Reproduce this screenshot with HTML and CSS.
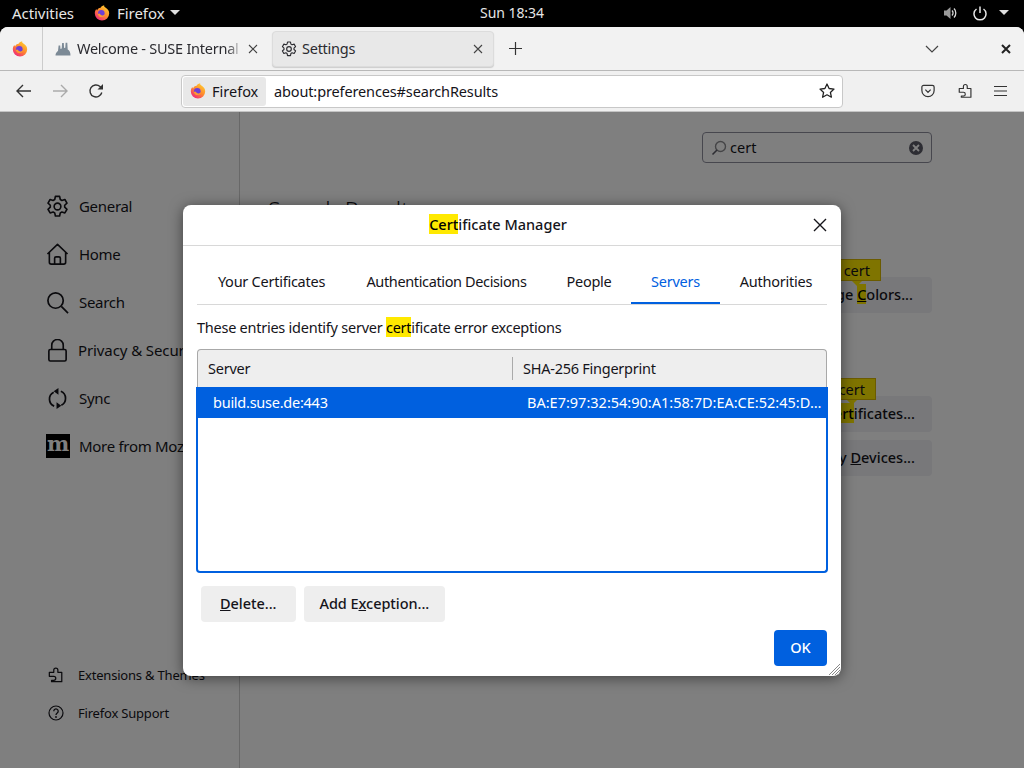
FILE: index.html
```html
<!DOCTYPE html>
<html>
<head>
	<meta charset="utf-8">
	<title>Settings</title>
	<link rel="stylesheet" href="styles.css">
</head>
<body>
<svg class="defs" width="0" height="0">
	<defs>
		<linearGradient id="fxg" x1="0.85" y1="0.05" x2="0.2" y2="0.95">
			<stop offset="0" stop-color="#ffd02e"/>
			<stop offset="0.5" stop-color="#ff8a2e"/>
			<stop offset="1" stop-color="#f0287a"/>
		</linearGradient>
		<symbol id="fx" viewBox="0 0 16 16">
			<path fill="url(#fxg)" d="M8 15.500A7.200 7.200 0 0 1 .8 8.300c0-1.500.5-3 1.500-4.200.1.600.4 1 .8 1.300C3.500 3.800 5 2.900 6.600 2.700 7 1.700 8.200.8 10.200.3 9.900 1.300 10.400 1.900 11.400 2.500c2.400 1.400 3.800 3.400 3.800 5.800A7.200 7.200 0 0 1 8 15.500z"/>
			<circle cx="7.300" cy="8.300" r="3.300" fill="#6e3fd6"/>
			<path fill="#ff9a2e" d="M3.600 8.400c.3 2.400 2.200 3.900 4.400 3.700 1.700-.2 2.900-1.300 3.200-2.800-1 1.100-2.400 1.400-3.700.9-1-.4-1.600-1-1.800-1.800-.7.400-1.400.4-2.100 0z"/>
		</symbol>
		<symbol id="gear" viewBox="0 0 24 24">
			<path fill="none" stroke="currentColor" stroke-width="1.700" stroke-linejoin="round" d="M9.800 1.500h4.400l.7 3.200 1.700 1 3.100-1 2.200 3.800-2.400 2.200v2l2.400 2.200-2.200 3.800-3.100-1-1.700 1-.7 3.200H9.800l-.7-3.200-1.700-1-3.100 1-2.200-3.800 2.400-2.200v-2L2.100 8.500l2.200-3.800 3.100 1 1.700-1z"/>
			<circle cx="12" cy="12" r="3.500" fill="none" stroke="currentColor" stroke-width="1.700"/>
		</symbol>
		<symbol id="puzzle" viewBox="0 0 18 18">
			<path fill="none" stroke="currentColor" stroke-width="1.400" stroke-linejoin="round" d="M1.500 6h5V3.500a2.300 2.300 0 0 1 4.600 0V6h4.400v10.500H4V15h2.500a2.200 2.200 0 0 0 0-4.500h-5z"/>
		</symbol>
		<symbol id="tabx" viewBox="0 0 10 10">
			<path stroke="currentColor" stroke-width="1.100" d="M1 1l8 8M9 1l-8 8"/>
		</symbol>
	</defs>
</svg>

<div class="topbar">
	<span>Activities</span>
	<span class="tb-app">
		<svg class="logo"><use href="#fx"/></svg>
		Firefox
		<i class="caret"></i>
	</span>
	<span class="tb-clock">Sun 18:34</span>
	<span class="tb-tray">
		<svg class="tray-snd" width="15" height="16" viewBox="0 0 15 16"><path fill="#9a9a9a" d="M1 5.500h2.500L7.500 2v12l-4-3.500H1z"/><path fill="none" stroke="#d8d8d8" stroke-width="1.300" d="M9 5.500a3.500 3.500 0 0 1 0 5M11 3.500a6.500 6.500 0 0 1 0 9"/></svg>
		<svg width="14" height="16" viewBox="0 0 14 16"><path fill="none" stroke="#e8e8e8" stroke-width="1.500" d="M7 1.500v6.500M3.500 4a6 6 0 1 0 7 0"/></svg>
		<i class="caret"></i>
	</span>
</div>

<div class="window">
	<div class="tabbar">
		<div class="tab-pin"><svg class="logo"><use href="#fx"/></svg></div>
		<div class="tab tab-welcome">
			<svg width="17" height="14" viewBox="0 0 17 14"><path fill="#7c8a96" d="M0.500 13.500c0-2 1-3.500 2.500-4.500l.6-5.500h1.600l.3 3.500 1.200-.5.4-5.500h1.700l.3 5 1.200-.2.300-5h1.700l.4 6.700c1.600.8 2.800 2.800 2.800 6z"/></svg>
			<span class="tab-title">Welcome - SUSE Internal Q</span>
			<svg class="tab-x"><use href="#tabx"/></svg>
		</div>
		<div class="tab tab-active">
			<svg class="tab-gear"><use href="#gear"/></svg>
			<span class="tab-title">Settings</span>
			<svg class="tab-x"><use href="#tabx"/></svg>
		</div>
		<svg class="newtab" width="13" height="13" viewBox="0 0 13 13"><path stroke="#333" stroke-width="1.200" d="M6.500 0v13M0 6.500h13"/></svg>
		<svg class="tablist" width="14" height="8" viewBox="0 0 14 8"><path fill="none" stroke="#444" stroke-width="1.200" d="M1 1l6 6 6-6"/></svg>
		<svg class="winclose" width="10" height="10" viewBox="0 0 10 10"><path stroke="#222" stroke-width="2" d="M1 1l8 8M9 1l-8 8"/></svg>
	</div>

	<div class="navbar">
		<svg class="nav-back" width="16" height="14" viewBox="0 0 16 14"><path fill="none" stroke="#333" stroke-width="1.400" d="M15 7H1.500M7 1L1 7l6 6"/></svg>
		<svg class="nav-fwd" width="16" height="14" viewBox="0 0 16 14"><path fill="none" stroke="#aaa" stroke-width="1.400" d="M1 7h13.500M9 1l6 6-6 6"/></svg>
		<svg class="nav-reload" width="16" height="16" viewBox="0 0 16 16"><path fill="none" stroke="#333" stroke-width="1.400" d="M13.800 9.500A6 6 0 1 1 12 3.500l2 2"/><path fill="#333" d="M15 1v5.500H9.500z"/></svg>
		<div class="urlbar">
			<span class="identity"><svg class="logo"><use href="#fx"/></svg>Firefox</span>
			<span class="url">about:preferences#searchResults</span>
			<svg class="star" width="16" height="16" viewBox="0 0 16 16"><path fill="none" stroke="#222" stroke-width="1.300" stroke-linejoin="round" d="M8 1l2.100 4.500 4.900.6-3.600 3.300 1 4.800L8 11.800l-4.400 2.400 1-4.800L1 6.100l4.900-.6z"/></svg>
		</div>
		<div class="nav-tools">
			<svg class="ic-pocket" width="14" height="14" viewBox="0 0 16 16"><path fill="none" stroke="#333" stroke-width="1.400" d="M3 1.500h10a2 2 0 0 1 2 2v4a7 7 0 0 1-14 0v-4a2 2 0 0 1 2-2zM5 6.500l3 3 3-3"/></svg>
			<svg class="ic-puzzle"><use href="#puzzle"/></svg>
			<svg width="13" height="12" viewBox="0 0 13 12"><path stroke="#333" stroke-width="1.200" d="M0 1.500h13M0 6h13M0 10.500h13"/></svg>
		</div>
	</div>

	<div class="content">
		<div class="sidebar">
			<ul class="cats">
				<li><svg class="cat-ic"><use href="#gear"/></svg>General</li>
				<li><svg class="cat-ic" viewBox="0 0 24 24"><path fill="none" stroke="currentColor" stroke-width="1.700" stroke-linejoin="round" d="M1.500 11.500L12 1.500l10.500 10M3.500 9.500V20a2 2 0 0 0 2 2h13a2 2 0 0 0 2-2V9.500M9 22v-6a1.500 1.500 0 0 1 1.500-1.500h3A1.500 1.500 0 0 1 15 16v6"/></svg>Home</li>
				<li><svg class="cat-ic" viewBox="0 0 24 24"><circle cx="10" cy="10" r="8" fill="none" stroke="currentColor" stroke-width="1.800"/><path stroke="currentColor" stroke-width="1.800" d="M16 16l7 7"/></svg>Search</li>
				<li class="cat-priv"><svg class="cat-ic" viewBox="0 0 24 24"><path fill="none" stroke="currentColor" stroke-width="1.700" d="M4.500 11h15a1.500 1.500 0 0 1 1.500 1.500v9a1.500 1.500 0 0 1-1.500 1.500h-15A1.500 1.500 0 0 1 3 21.500v-9A1.500 1.500 0 0 1 4.500 11zM6 11V6.500a6 6 0 0 1 12 0V11"/></svg>Privacy &amp; Security</li>
				<li><svg class="cat-ic" viewBox="0 0 24 24"><path fill="none" stroke="currentColor" stroke-width="1.800" d="M8 5.500A8 8 0 0 0 8.500 20M16 19a8 8 0 0 0-.5-14.500"/><path fill="currentColor" d="M13 1v7L8 4.500zM11 23v-7l5 3.500z"/></svg>Sync</li>
				<li><span class="moz-m">m</span>More from Mozilla</li>
			</ul>
			<ul class="cats-foot">
				<li><svg class="foot-ic"><use href="#puzzle"/></svg>Extensions &amp; Themes</li>
				<li><svg class="foot-ic" viewBox="0 0 16 16"><circle cx="8" cy="8" r="7" fill="none" stroke="currentColor" stroke-width="1.200"/><path fill="none" stroke="currentColor" stroke-width="1.300" d="M5.800 6.200a2.200 2.200 0 1 1 3.400 1.800C8.400 8.600 8 9 8 10"/><circle cx="8" cy="12" r="0.900" fill="currentColor"/></svg>Firefox Support</li>
			</ul>
		</div>
		<div class="main">
			<div class="search">
				<svg width="16" height="16" viewBox="0 0 16 16"><circle cx="9.500" cy="6.500" r="5" fill="none" stroke="#8a8a8e" stroke-width="1.400"/><path stroke="#5b5b66" stroke-width="1.600" d="M6 10l-4.500 4.500"/></svg>
				<span class="search-val">cert</span>
				<span class="search-clear"><svg width="8" height="8" viewBox="0 0 8 8"><path stroke="#fff" stroke-width="1.800" d="M1 1l6 6M7 1L1 7"/></svg></span>
			</div>
			<h1 class="results">Search Results</h1>
			<div class="pref-btn pref-colors">
				<span class="tag tag-a">cert<i></i></span>
				<span>Manage <u class="hl">C</u>olors...</span>
			</div>
			<div class="pref-btn pref-certs">
				<span class="tag tag-b">cert<i></i></span>
				<span>View <span class="hl">Cert</span>ificates...</span>
			</div>
			<div class="pref-btn pref-dev"><span>Security <u>D</u>evices...</span></div>
		</div>
	</div>

	<div class="overlay"></div>

	<div class="dialog">
		<div class="dlg-title">
			<span><span class="hl">Cert</span>ificate Manager</span>
			<svg class="dlg-x" width="14" height="14" viewBox="0 0 14 14"><path stroke="#15141a" stroke-width="1.400" d="M1 1l12 12M13 1L1 13"/></svg>
		</div>
		<div class="dlg-body">
			<div class="tabs">
				<span class="dtab">Your Certificates</span>
				<span class="dtab">Authentication Decisions</span>
				<span class="dtab">People</span>
				<span class="dtab dtab-on">Servers</span>
				<span class="dtab">Authorities</span>
			</div>
			<p class="desc">These entries identify server <span class="hl">cert</span>ificate error exceptions</p>
			<div class="tree">
				<div class="tree-head">
					<span class="col-a">Server</span>
					<span class="col-b">SHA-256 Fingerprint</span>
				</div>
				<div class="tree-list">
					<div class="tree-row">
						<span class="col-a">build.suse.de:443</span>
						<span class="col-b">BA:E7:97:32:54:90:A1:58:7D:EA:CE:52:45:DA:0B:11</span>
					</div>
				</div>
			</div>
			<div class="dlg-btns">
				<span class="btn btn-del"><span><u>D</u>elete...</span></span>
				<span class="btn"><span>Add E<u>x</u>ception...</span></span>
			</div>
			<div class="dlg-foot">
				<span class="btn btn-ok">OK</span>
			</div>
		</div>
		<svg class="grip" width="11" height="11" viewBox="0 0 11 11"><path stroke="#888" d="M0 11L11 0M3 11l8-8M6 11l5-5M9 11l2-2"/></svg>
	</div>
</div>
</body>
</html>
```

FILE: styles.css
```css
* {box-sizing: border-box;}
html, body {margin: 0; height: 100%;}
body {background: #000; color: #15141a; font-family: "Noto Sans", sans-serif; font-size: 15px; overflow: hidden;}
ul {list-style: none; margin: 0; padding: 0;}
.defs {position: absolute;}
.logo {width: 16px; height: 16px; flex: none;}
.hl {background: #ffe900; color: #000;}

/* gnome top bar */
.topbar {height: 27px; display: flex; align-items: center; color: #e6e6e6; font-size: 15px; letter-spacing: -.05px; padding: 0 0 2px 12px; position: relative;}
.tb-app {display: flex; align-items: center; gap: 7px; margin-left: 20px;}
.tb-app .caret {margin-left: -2px;}
.tb-clock {position: absolute; left: 480px; top: 3px; font-size: 14px;}
.tb-tray {margin-left: auto; display: flex; align-items: center; gap: 12px; padding-right: 15px;}
.tray-snd {margin-right: 3px;}
.caret {width: 0; height: 0; border: 5px solid transparent; border-top: 5px solid #e0e0e0; border-bottom: 0;}

/* browser chrome */
.window {position: relative; height: 741px; display: flex; flex-direction: column; background: #fff; border-radius: 8px 8px 0 0; overflow: hidden;}
.tabbar {height: 44px; flex: none; background: #f2f2f2; border-bottom: 1px solid #b8b8b8; display: flex; align-items: center;}
.tab-pin {width: 43px; height: 43px; border-right: 1px solid #ccc; display: flex; align-items: center; justify-content: center; padding-right: 3px;}
.tab {height: 36px; display: flex; align-items: center; font-size: 14.5px; letter-spacing: -.25px; color: #2b2b30;}
.tab-title {flex: 1; overflow: hidden; white-space: nowrap; padding-bottom: 2px;}
.tab-x {width: 10px; height: 10px; color: #444; flex: none;}
.tab-welcome {width: 229px; padding: 0 14px 0 12px; gap: 5px;}
.tab-welcome .tab-title {-webkit-mask-image: linear-gradient(to right, #000 90%, transparent 100%);}
.tab-active {width: 222px; background: #e8e8e8; border: 1px solid #dcdcdc; border-radius: 4px; padding: 0 10px 0 8px; gap: 5px; box-shadow: 0 1px 1px #ccc;}
.tab-gear {width: 16px; height: 16px; flex: none;}
.newtab {margin-left: 15px;}
.tablist {margin-left: auto;}
.winclose {margin: 0 13px 0 62px;}

.navbar {height: 41px; flex: none; background: #f0f0f0; border-bottom: 1px solid #c4c4c4; display: flex; align-items: center;}
.nav-back {margin-left: 16px;}
.nav-fwd {margin-left: 20px;}
.nav-reload {margin-left: 20px;}
.urlbar {width: 662px; height: 33px; margin-left: 77px; background: #fff; border: 1px solid #c8c8c8; border-radius: 4px; display: flex; align-items: center; padding: 1px 7px 1px 1px;}
.identity {height: 29px; width: 83px; background: #e8e8e8; border-radius: 3px; display: flex; align-items: center; gap: 6px; padding-left: 7px; font-size: 14.5px;}
.url {flex: 1; margin-left: 8px; font-size: 14.5px; letter-spacing: -.13px;}
.nav-tools {display: flex; align-items: center; gap: 21px; margin-left: 78px; color: #333;}
.ic-pocket {margin-right: 2px;}
.ic-puzzle {width: 15px; height: 18px;}

/* preferences page */
.content {flex: 1; display: flex; background: #fff; color: #15141a;}
.sidebar {width: 240px; flex: none; border-right: 1px solid #d0d0d0; display: flex; flex-direction: column; justify-content: space-between; padding: 70px 0 36px 46px;}
.cats li {height: 48px; display: flex; align-items: center; font-size: 15px; letter-spacing: -.3px; white-space: nowrap;}
.cat-ic {width: 23px; height: 23px; margin-right: 10px; flex: none;}
.cats .cat-priv {letter-spacing: -.1px;}
.cat-priv .cat-ic {margin-right: 9px;}
.moz-m {width: 24px; height: 24px; margin-right: 9px; background: #000; color: #fff; font-family: "DejaVu Serif", serif; font-weight: bold; font-size: 21px; line-height: 20px; text-align: center; flex: none;}
.cats-foot {padding-left: 2px;}
.cats-foot li {height: 38px; display: flex; align-items: center; font-size: 13px; letter-spacing: -.2px; white-space: nowrap;}
.foot-ic {width: 16px; height: 18px; margin-right: 14px; flex: none;}

.main {flex: 1; padding: 20px 92px 0 28px; display: flex; flex-direction: column; align-items: flex-end;}
.search {width: 230px; height: 31px; border: 1px solid #8f8f9d; border-radius: 4px; display: flex; align-items: center; padding: 0 8px; gap: 3px;}
.search-val {flex: 1; font-size: 14.5px; padding-bottom: 1px;}
.search-clear {width: 14px; height: 14px; background: #5b5b66; border-radius: 50%; display: flex; align-items: center; justify-content: center;}
.results {align-self: flex-start; font-size: 23px; font-weight: 300; margin: 32px 0 0; line-height: 30px;}
.pref-btn {position: relative; height: 36px; background: #f0f0f4; border-radius: 4px; padding: 0 17px 2px 12px; display: flex; align-items: center; font-size: 14.5px; font-weight: 500; white-space: nowrap;}
.pref-colors {margin-top: 52px; padding-right: 19px;}
.pref-certs {margin-top: 83px;}
.pref-dev {margin-top: 8px;}
.tag {position: absolute; top: -18px; height: 22px; padding: 0 10px 1px; background: #ffe900; border: 1px solid #d7b600; font-size: 14.5px; font-weight: 400; display: flex; align-items: center;}
.tag i {position: absolute; left: 50%; bottom: -6px; margin-left: -5px; border: 5px solid transparent; border-top-color: #ffe900; border-bottom: 0;}
.tag-a {right: 51px;}
.tag-b {right: 56px;}

.overlay {position: absolute; inset: 0; top: 85px; background: rgba(0,0,0,.5);}

/* certificate manager dialog */
.dialog {position: absolute; left: 183px; top: 178px; width: 658px; height: 471px; background: #fff; border-radius: 8px; box-shadow: 0 2px 14px rgba(0,0,0,.5); display: flex; flex-direction: column; font-size: 14.5px;}
.dlg-title {height: 41px; flex: none; border-bottom: 1px solid #d8d8d8; font-weight: 500; display: flex; align-items: center; justify-content: center; position: relative; padding: 0 28px 2px 0;}
.dlg-x {position: absolute; right: 14px; top: 13px;}
.dlg-body {flex: 1; padding: 14px 14px 10px; display: flex; flex-direction: column; letter-spacing: -.25px;}
.tabs {height: 45px; flex: none; border-bottom: 1px solid #d8d8d8; display: flex;}
.dtab {height: 44px; border-bottom: 2px solid transparent; padding-bottom: 1px; display: flex; align-items: center; justify-content: center; white-space: nowrap;}
.dtab:nth-child(1) {width: 149px;}
.dtab:nth-child(2) {width: 201px; letter-spacing: -.37px;}
.dtab:nth-child(3) {width: 84px;}
.dtab:nth-child(4) {width: 89px;}
.dtab:nth-child(5) {width: 107px; padding-left: 5px;}
.dtab-on {color: #0060df; border-bottom-color: #0060df;}
.desc {margin: 12px 0 12px; line-height: 20px;}
.tree {flex: none; height: 224px; display: flex; flex-direction: column;}
.tree-head {height: 38px; flex: none; background: #eee; border: 1px solid #a8a8a8; border-bottom: 0; border-radius: 4px 4px 0 0; display: flex; align-items: center; padding-bottom: 1px;}
.tree-head .col-a {width: 314px; padding: 0 0 1px 10px;}
.tree-head .col-b {flex: 1; border-left: 1px solid #aaa; padding-left: 10px; line-height: 23px;}
.tree-list {flex: 1; margin: 0 -1px; border: 2px solid #0060df; border-top: 0; border-radius: 0 0 4px 4px;}
.tree-row {height: 31px; margin: 0 -1px; background: #0060df; color: #fff; display: flex; align-items: center; padding-bottom: 2px;}
.tree-row .col-a {width: 330px; padding-left: 16px; flex: none;}
.tree-row .col-b {flex: 1; min-width: 0; overflow: hidden; text-overflow: ellipsis; white-space: nowrap; padding-right: 3px; letter-spacing: 0;}
.dlg-btns {display: flex; gap: 8px; padding: 13px 4px 0;}
.btn {height: 36px; padding: 0 16px 2px 15px; background: #eee; border-radius: 4px; display: flex; align-items: center; font-weight: 500; letter-spacing: -.05px; white-space: nowrap;}
.btn-del {padding: 0 20px 2px 19px;}
.dlg-foot {display: flex; justify-content: flex-end; margin-top: 8px;}
.btn-ok {background: #0060df; color: #fff; width: 53px; padding: 0 0 2px; justify-content: center;}
.grip {position: absolute; right: 1px; bottom: 1px;}
```
